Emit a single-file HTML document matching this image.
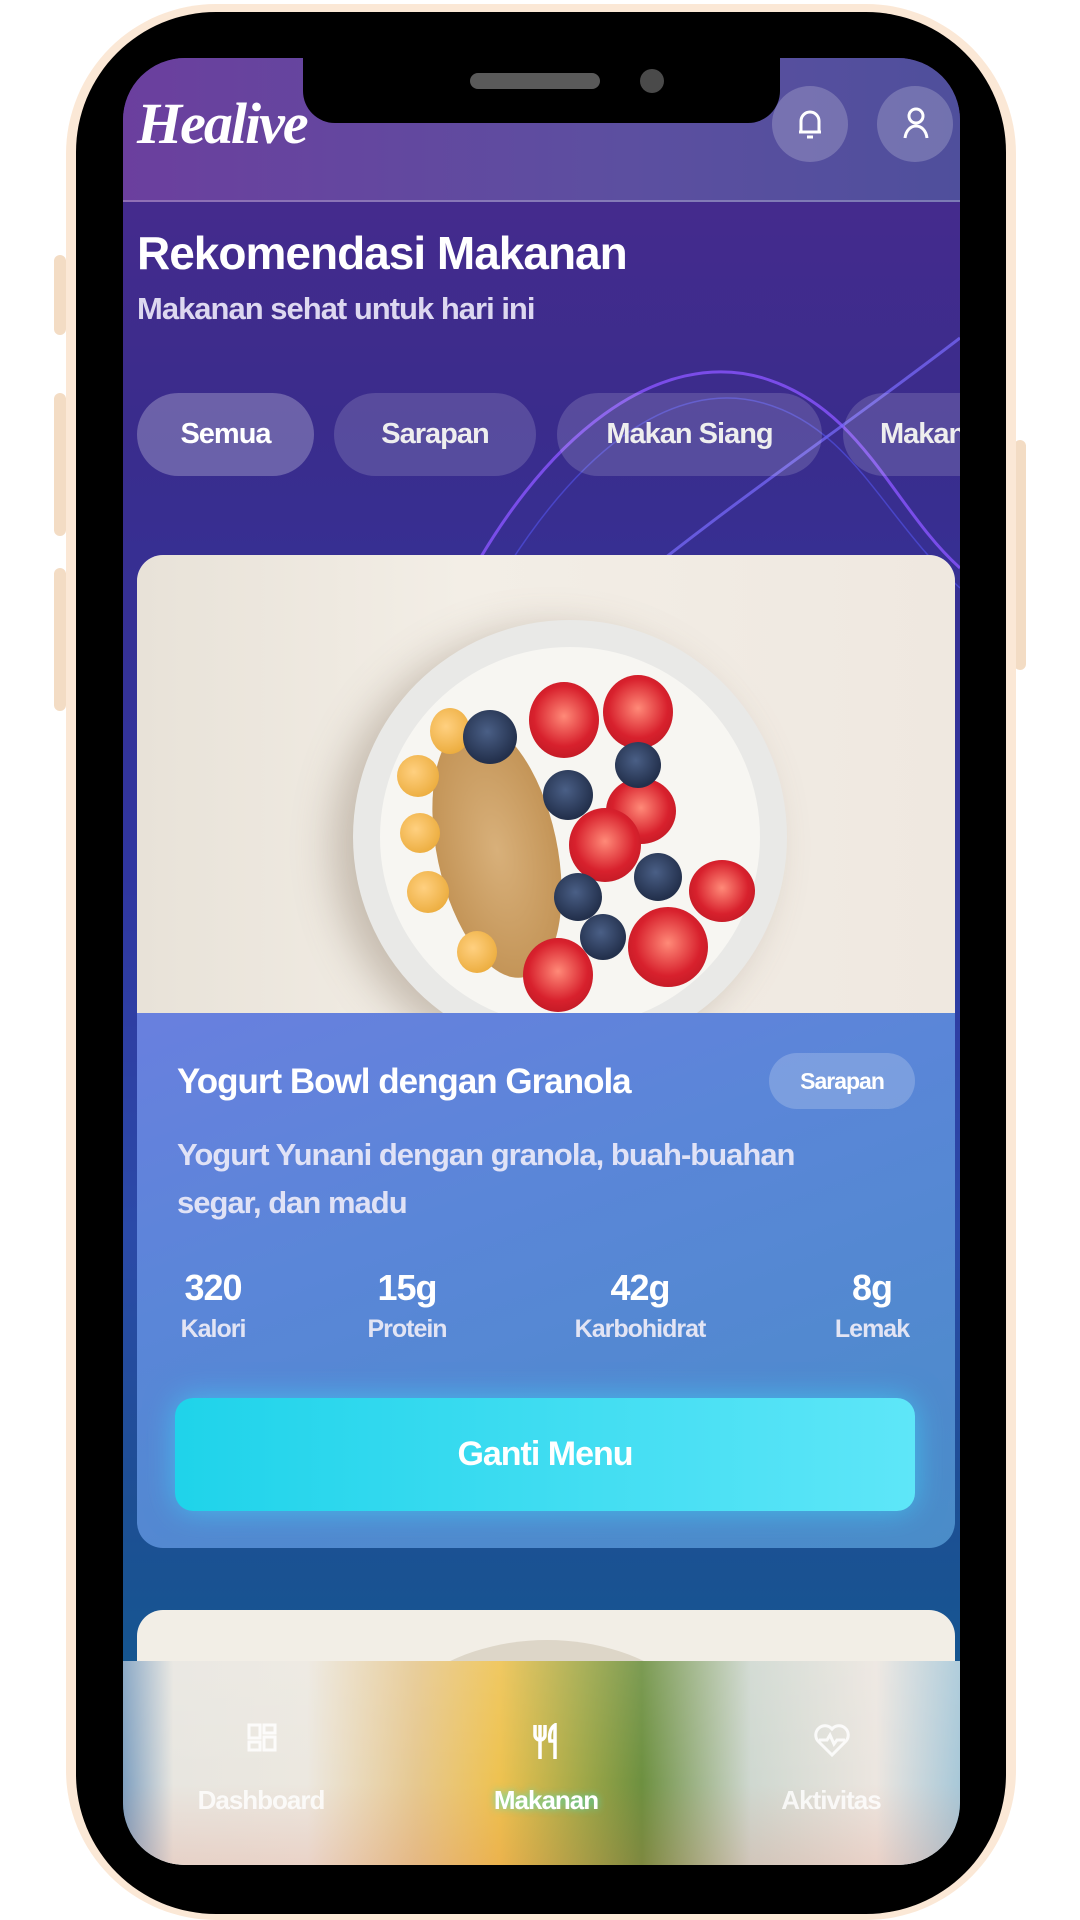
<!DOCTYPE html>
<html><head><meta charset="utf-8"><style>
*{margin:0;padding:0;box-sizing:border-box}
body{width:1080px;height:1920px;background:#fff;position:relative;overflow:hidden;font-family:"Liberation Sans",sans-serif}
.a{position:absolute}
.btnside{position:absolute;background:#f3dcc4;border-radius:6px}
.scr{position:absolute;left:123px;top:58px;width:837px;height:1807px;border-radius:62px;overflow:hidden;
background:linear-gradient(180deg,#4b2a8e 0%,#3a2c8c 20%,#3036a0 45%,#2b4aa8 65%,#1d4f94 80%,#0c5e8c 100%)}
.t{color:#fff;font-weight:bold;letter-spacing:-1px;position:absolute;white-space:nowrap}
.chip{position:absolute;top:335px;height:83px;border-radius:42px;background:rgba(255,255,255,.15);color:#eee;font-size:29px;font-weight:bold;letter-spacing:-1px;display:flex;align-items:center;justify-content:center;white-space:nowrap;overflow:hidden}
.c{position:absolute;border-radius:50%}
.bb{background:radial-gradient(circle at 45% 40%,#4a5f86,#23304c 70%)}
.sb{background:radial-gradient(circle at 50% 45%,#ff8a78,#d8212d 55%,#b0141f)}
.hn{background:radial-gradient(circle at 40% 40%,#ffd080,#e6a22a)}
.stat{position:absolute;text-align:center;color:#fff;width:200px}
.stat b{display:block;font-size:36px;letter-spacing:-1px}
.stat span{display:block;font-size:25px;color:#e2e4f4;letter-spacing:-1px;margin-top:6px;font-weight:bold}
</style></head><body>
<div class="btnside" style="left:54px;top:255px;width:12px;height:80px"></div>
<div class="btnside" style="left:54px;top:393px;width:12px;height:143px"></div>
<div class="btnside" style="left:54px;top:568px;width:12px;height:143px"></div>
<div class="btnside" style="left:1014px;top:440px;width:12px;height:230px"></div>
<div class="a" style="left:66px;top:4px;width:950px;height:1916px;border-radius:150px;background:#fbe8d6"></div>
<div class="a" style="left:76px;top:12px;width:930px;height:1902px;border-radius:140px;background:#000"></div>
<div class="scr">
  <div class="a" style="left:0;top:0;width:837px;height:144px;background:linear-gradient(90deg,#6b3f9e,#5c4fa0 60%,#4f4f9c);border-bottom:2px solid rgba(255,255,255,.25)"></div>
  <div class="a" style="left:14px;top:32px;color:#fff;font-family:'Liberation Serif',serif;font-style:italic;font-weight:bold;font-size:58px;letter-spacing:-2px">Healive</div>
  <div class="c" style="left:649px;top:28px;width:76px;height:76px;background:rgba(255,255,255,.2)"></div>
  <div class="c" style="left:754px;top:28px;width:76px;height:76px;background:rgba(255,255,255,.2)"></div>
  <svg class="a" style="left:670px;top:48px" width="34" height="36" viewBox="0 0 34 36" fill="none" stroke="#fff" stroke-width="3"><path d="M8 26V15a9 9 0 0 1 18 0v11H6h22"/><path d="M14 31h6"/></svg>
  <svg class="a" style="left:776px;top:46px" width="34" height="40" viewBox="0 0 34 40" fill="none" stroke="#fff" stroke-width="3"><circle cx="17" cy="12" r="7"/><path d="M6 34c1-8 6-12 11-12s10 4 11 12"/></svg>
  <svg class="a" style="left:300px;top:250px" width="537" height="300" viewBox="0 0 537 300" fill="none">
    <path d="M30 300C120 120 240 40 340 70S470 200 537 260" stroke="#8a55ff" stroke-width="3" opacity=".8"/>
    <path d="M180 300C300 200 420 120 537 30" stroke="#7b6cff" stroke-width="3" opacity=".7"/>
    <path d="M60 300C150 140 250 70 340 95S460 210 537 280" stroke="#5a5cff" stroke-width="1.5" opacity=".5"/>
  </svg>
  <div class="t" style="left:14px;top:168px;font-size:46px">Rekomendasi Makanan</div>
  <div class="t" style="left:14px;top:233px;font-size:31px;color:#ddd8f0;font-weight:bold">Makanan sehat untuk hari ini</div>
  <div class="chip" style="left:14px;width:177px;background:rgba(255,255,255,.25);color:#fff">Semua</div>
  <div class="chip" style="left:211px;width:202px">Sarapan</div>
  <div class="chip" style="left:434px;width:265px">Makan Siang</div>
  <div class="chip" style="left:720px;width:200px;justify-content:flex-start;padding-left:37px">Makan Malam</div>
  <div class="a" style="left:14px;top:497px;width:818px;height:993px;border-radius:26px;overflow:hidden;background:linear-gradient(160deg,#6a62d0 0%,#6c7ee0 30%,#5a86d8 60%,#4a8cc8 100%)">
    <div class="a" style="left:0;top:0;width:818px;height:458px;background:linear-gradient(90deg,#e8e2d8,#f3eee6 40%,#efe8e0);overflow:hidden">
      <div class="c" style="left:216px;top:65px;width:434px;height:434px;background:#e9e9e7;box-shadow:-20px 10px 40px rgba(120,100,80,.35)"></div>
      <div class="c" style="left:243px;top:92px;width:380px;height:380px;background:#f7f6f2"></div>
      <div class="a" style="left:300px;top:165px;width:120px;height:260px;border-radius:50%;background:radial-gradient(#d8b07a,#c49558 70%);transform:rotate(-12deg)"></div>
      <div class="c hn" style="left:293px;top:153px;width:40px;height:46px"></div>
      <div class="c hn" style="left:260px;top:200px;width:42px;height:42px"></div>
      <div class="c hn" style="left:263px;top:258px;width:40px;height:40px"></div>
      <div class="c hn" style="left:270px;top:316px;width:42px;height:42px"></div>
      <div class="c hn" style="left:320px;top:376px;width:40px;height:42px"></div>
      <div class="c sb" style="left:392px;top:127px;width:70px;height:76px"></div>
      <div class="c sb" style="left:466px;top:120px;width:70px;height:74px"></div>
      <div class="c sb" style="left:469px;top:223px;width:70px;height:66px"></div>
      <div class="c sb" style="left:432px;top:253px;width:72px;height:74px"></div>
      <div class="c sb" style="left:552px;top:305px;width:66px;height:62px"></div>
      <div class="c sb" style="left:491px;top:352px;width:80px;height:80px"></div>
      <div class="c sb" style="left:386px;top:383px;width:70px;height:74px"></div>
      <div class="c bb" style="left:326px;top:155px;width:54px;height:54px"></div>
      <div class="c bb" style="left:478px;top:187px;width:46px;height:46px"></div>
      <div class="c bb" style="left:406px;top:215px;width:50px;height:50px"></div>
      <div class="c bb" style="left:497px;top:298px;width:48px;height:48px"></div>
      <div class="c bb" style="left:417px;top:318px;width:48px;height:48px"></div>
      <div class="c bb" style="left:443px;top:359px;width:46px;height:46px"></div>
    </div>
    <div class="t" style="left:40px;top:507px;font-size:35px">Yogurt Bowl dengan Granola</div>
    <div class="a" style="left:632px;top:498px;width:146px;height:56px;border-radius:28px;background:rgba(255,255,255,.2);color:#fff;font-size:23px;font-weight:bold;letter-spacing:-1px;display:flex;align-items:center;justify-content:center">Sarapan</div>
    <div class="a" style="left:40px;top:576px;font-size:31px;line-height:48px;color:#e0e2f6;font-weight:bold;letter-spacing:-1px;white-space:nowrap">Yogurt Yunani dengan granola, buah-buahan<br>segar, dan madu</div>
    <div class="stat" style="left:-24px;top:712px"><b>320</b><span>Kalori</span></div>
    <div class="stat" style="left:170px;top:712px"><b>15g</b><span>Protein</span></div>
    <div class="stat" style="left:403px;top:712px"><b>42g</b><span>Karbohidrat</span></div>
    <div class="stat" style="left:635px;top:712px"><b>8g</b><span>Lemak</span></div>
    <div class="a" style="left:38px;top:843px;width:740px;height:113px;border-radius:18px;background:linear-gradient(90deg,#1fd3ea,#5ee6f8);box-shadow:0 0 30px rgba(60,220,255,.6);color:#fff;font-size:34px;font-weight:bold;letter-spacing:-1px;display:flex;align-items:center;justify-content:center">Ganti Menu</div>
  </div>
  <div class="a" style="left:14px;top:1552px;width:818px;height:300px;border-radius:26px;background:#f2eee6;overflow:hidden">
    <div class="c" style="left:220px;top:30px;width:380px;height:300px;background:#ddd6c8"></div>
  </div>
  <div class="a" style="left:0;top:1603px;width:837px;height:204px;background:linear-gradient(90deg,#7fa0c0 0%,#e8e6e0 6%,#ece8e0 22%,#e6c890 35%,#eec250 45%,#a0a848 55%,#6d9040 62%,#cfd8d0 75%,#ece6e0 90%,#a8c8d8 100%)"></div>
  <div class="a" style="left:0;top:1603px;width:837px;height:204px;background:linear-gradient(180deg,rgba(255,255,255,.1),rgba(255,255,255,0) 60%,rgba(220,90,60,.15))"></div>
  <svg class="a" style="left:124px;top:1665px" width="30" height="34" viewBox="0 0 30 34" fill="none" stroke="#fff" stroke-width="3" opacity=".85"><rect x="2" y="2" width="11" height="13"/><rect x="17" y="2" width="11" height="8"/><rect x="2" y="19" width="11" height="8"/><rect x="17" y="14" width="11" height="13"/></svg>
  <svg class="a" style="left:408px;top:1665px" width="32" height="38" viewBox="0 0 32 38" fill="none" stroke="#fff" stroke-width="3.5"><path d="M4 2v10a5 5 0 0 0 10 0V2M9 2v34M24 36V2c-5 3-6 10-5 16h5"/></svg>
  <svg class="a" style="left:690px;top:1665px" width="38" height="34" viewBox="0 0 38 34" fill="none" stroke="#fff" stroke-width="3" opacity=".85"><path d="M19 32L5 18A9 9 0 0 1 19 6a9 9 0 0 1 14 12z"/><path d="M6 17h8l3-5 4 9 3-4h8"/></svg>
  <div class="t" style="left:38px;top:1727px;width:200px;text-align:center;font-size:26px;color:rgba(255,255,255,.8)">Dashboard</div>
  <div class="t" style="left:323px;top:1727px;width:200px;text-align:center;font-size:26px;text-shadow:0 0 8px rgba(60,230,200,.8)">Makanan</div>
  <div class="t" style="left:608px;top:1727px;width:200px;text-align:center;font-size:26px;color:rgba(255,255,255,.8)">Aktivitas</div>
  <div class="a" style="left:180px;top:-10px;width:477px;height:75px;background:#000;border-radius:0 0 32px 32px"></div>
  <div class="a" style="left:347px;top:15px;width:130px;height:16px;border-radius:8px;background:#5a5a5a"></div>
  <div class="c" style="left:517px;top:11px;width:24px;height:24px;background:#4a4a4a"></div>
</div>
</body></html>
